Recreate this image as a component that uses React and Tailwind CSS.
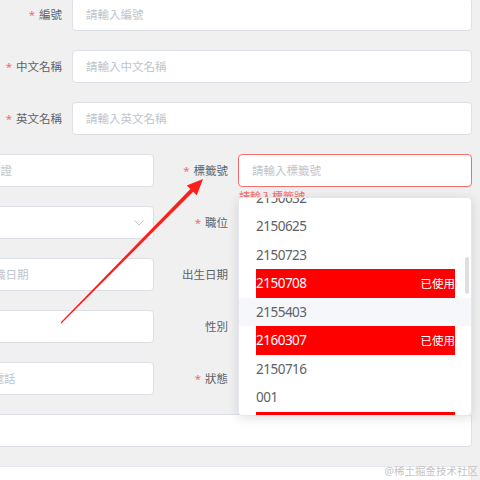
import React from 'react';

const Star = () => <span className="text-[#f56c6c] mr-[4px]">*</span>;

const Field = ({ placeholder, error, padLeft = 'pl-[13px]', children }) => (
    <div className={`relative h-[33px] bg-white rounded-[4px] border flex items-center ${padLeft} ${error ? 'border-[#f56c6c]' : 'border-[#dcdfe6]'}`}>
        <span className="text-[#c0c4cc] whitespace-nowrap">{placeholder}</span>
        {children}
        {error && (
            <div className="absolute left-0 top-full pt-[5px] text-[11px] leading-[12px] text-[#f56c6c] whitespace-nowrap">{error}</div>
        )}
    </div>
);

const Chevron = () => (
    <svg className="absolute right-[9px] top-1/2 -translate-y-1/2" width="10" height="6" viewBox="0 0 10 6" fill="none">
        <path d="M0.5 0.5 L5 5 L9.5 0.5" stroke="#c0c4cc" strokeWidth="1" />
    </svg>
);

// filas de una sola columna
const topRows = [
    { label: '編號', ph: '請輸入編號' },
    { label: '中文名稱', ph: '請輸入中文名稱' },
    { label: '英文名稱', ph: '請輸入英文名稱' },
];

// filas de dos columnas (la izquierda está cortada)
const pairRows = [
    { left: '請輸入身分證', leftPad: 'pl-[22px]', label: '標籤號', req: true, right: '請輸入標籤號', error: '請輸入標籤號' },
    { left: '', select: true, label: '職位', req: true },
    { left: '請輸入入職日期', leftPad: 'pl-[27px]', label: '出生日期' },
    { left: '', label: '性別' },
    { left: '請輸入聯絡電話', leftPad: 'pl-[14px]', label: '狀態', req: true },
];

const options = [
    { code: '2150632' },
    { code: '2150625' },
    { code: '2150723' },
    { code: '2150708', used: true },
    { code: '2155403', hover: true },
    { code: '2160307', used: true },
    { code: '2150716' },
    { code: '001' },
    { code: '2150999', used: true },
];

export default function App() {
    return (
        <div className="relative w-[480px] h-[480px] overflow-hidden bg-[#f0f0f0] font-['Noto_Sans','Noto_Sans_CJK_TC',sans-serif] text-[11.5px] text-[#606266]">
            <div className="flex flex-col gap-[19px] mt-[-2px]">
                {topRows.map((r) => (
                    <div key={r.label} className="flex items-center">
                        <div className="w-[72px] pr-[10px] text-right whitespace-nowrap">
                            <Star />{r.label}
                        </div>
                        <div className="flex-1 mr-[8px]">
                            <Field placeholder={r.ph} />
                        </div>
                    </div>
                ))}

                {pairRows.map((r) => (
                    <div key={r.label} className="flex items-center ml-[-80px]">
                        <div className="w-[234px] shrink-0">
                            <Field placeholder={r.left} padLeft={r.leftPad || 'pl-[13px]'}>
                                {r.select && <Chevron />}
                            </Field>
                        </div>
                        <div className="w-[84px] shrink-0 pr-[10px] text-right whitespace-nowrap">
                            {r.req && <Star />}{r.label}
                        </div>
                        <div className="flex-1 mr-[8px]">
                            <Field placeholder={r.right || ''} error={r.error} />
                        </div>
                    </div>
                ))}

                <div className="ml-[-80px] mr-[8px] h-[33px] bg-white rounded-[4px] border border-[#dcdfe6]" />
                <div className="ml-[-80px] mr-[8px] h-[40px] bg-white rounded-[4px] border border-[#e4e7ed]" />
            </div>

            {/* Dropdown del select de 標籤號 */}
            <div className="absolute left-[238px] top-[197px] w-[234px] h-[219px] bg-white rounded-[4px] border border-[#e4e7ed] shadow-[0_2px_12px_rgba(0,0,0,0.12)] overflow-hidden">
                <div className="mt-[-14.5px]">
                    {options.map((o) => (
                        <div key={o.code} className={`h-[28.5px] flex items-center pl-[17px] pr-[16px] ${o.hover ? 'bg-[#f5f7fa]' : ''}`}>
                            {o.used ? (
                                <div className="w-full h-full flex items-center justify-between bg-[#ff0000] text-white">
                                    <span className="text-[13.5px] tracking-[-0.5px]">{o.code}</span>
                                    <span>已使用</span>
                                </div>
                            ) : (
                                <span className="text-[13.5px] tracking-[-0.5px]">{o.code}</span>
                            )}
                        </div>
                    ))}
                </div>
                <div className="absolute right-[2px] top-[59px] w-[4px] h-[37px] rounded-full bg-[rgba(144,147,153,0.3)]" />
            </div>

            {/* Flecha roja */}
            <svg className="absolute left-0 top-0 pointer-events-none" width="480" height="480" viewBox="0 0 480 480">
                <polygon
                    points="60.6,322.6 190.4,189 186.8,185.5 203,179 196.8,195.3 193.2,191.8 61.4,323.4"
                    fill="#ff1f1a"
                />
            </svg>

            <div className="absolute right-[2px] bottom-[2px] text-[10.5px] leading-[14px] text-[#c4c4c4] whitespace-nowrap">
                @稀土掘金技术社区
            </div>
        </div>
    );
}
